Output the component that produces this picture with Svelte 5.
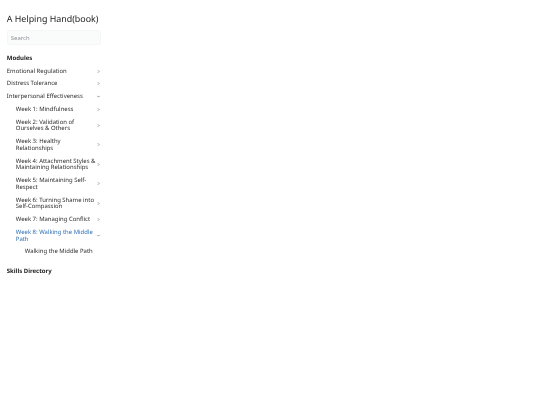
<script lang="ts">
  type Item = { label: string; chevron?: "right" | "down"; active?: boolean };

  const topModules: Item[] = [
    { label: "Emotional Regulation", chevron: "right" },
    { label: "Distress Tolerance", chevron: "right" },
    { label: "Interpersonal Effectiveness", chevron: "down" }
  ];

  const weeks: Item[] = [
    { label: "Week 1: Mindfulness", chevron: "right" },
    { label: "Week 2: Validation of Ourselves & Others", chevron: "right" },
    { label: "Week 3: Healthy Relationships", chevron: "right" },
    { label: "Week 4: Attachment Styles & Maintaining Relationships", chevron: "right" },
    { label: "Week 5: Maintaining Self-Respect", chevron: "right" },
    { label: "Week 6: Turning Shame into Self-Compassion", chevron: "right" },
    { label: "Week 7: Managing Conflict", chevron: "right" },
    { label: "Week 8: Walking the Middle Path", chevron: "down", active: true }
  ];
</script>

{#snippet row(item: Item)}
  <a class="row" class:active={item.active} href="#top">
    <span class="label">{item.label}</span>
    <svg class="chev" viewBox="0 0 16 16" aria-hidden="true">
      {#if item.chevron === "down"}
        <path d="M4 6l4 4 4-4" />
      {:else}
        <path d="M6 4l4 4-4 4" />
      {/if}
    </svg>
  </a>
{/snippet}

<aside class="sidebar">
  <h1>A Helping Hand(book)</h1>
  <input class="search" type="text" placeholder="Search" />

  <h2>Modules</h2>
  <nav>
    {#each topModules as item}
      {@render row(item)}
    {/each}
    <div class="nested">
      {#each weeks as item}
        {@render row(item)}
      {/each}
      <div class="nested">
        <a class="row" href="#top"><span class="label">Walking the Middle Path</span></a>
      </div>
    </div>
  </nav>

  <h2 class="skills">Skills Directory</h2>
</aside>

<style>
  :global(body) {
    margin: 0;
    background: #fff;
  }
  .sidebar {
    width: 95px;
    padding: 12.7px 0 0 6.8px;
    font-family: "Noto Sans", sans-serif;
    font-size: 5.95px;
    line-height: 6.75px;
    color: #2c2c2c;
    text-rendering: geometricPrecision;
    /* own layer: grayscale text antialiasing, no colour fringes */
    will-change: transform;
  }
  h1 {
    margin: 0;
    font-size: 8.9px;
    line-height: 11px;
    font-weight: 400;
    color: #222;
    white-space: nowrap;
  }
  .search {
    display: block;
    box-sizing: border-box;
    width: 94.5px;
    height: 15px;
    margin: 6.6px 0 0;
    padding: 0 3px;
    border: 1px solid #f5f6f7;
    border-radius: 2px;
    background: #fafbfb;
    font: inherit;
    outline: none;
  }
  .search::placeholder {
    color: #8f9297;
    opacity: 1;
  }
  h2 {
    margin: 9.4px 0 2.5px;
    font-size: 6px;
    line-height: 7.5px;
    font-weight: 700;
    color: #222;
  }
  .row {
    display: flex;
    align-items: center;
    justify-content: space-between;
    padding: 3px 1.3px 3px 0;
    color: inherit;
    text-decoration: none;
  }
  .label {
    flex: 1;
    min-width: 0;
  }
  .chev {
    flex: none;
    width: 5px;
    height: 5px;
    margin-left: -.5px;
    fill: none;
    stroke: #3a3a3a;
    stroke-width: 1.6;
  }
  .nested {
    padding-left: 9px;
  }
  .active {
    color: #2f6fb5;
  }
  .skills {
    margin-top: 9.5px;
  }
</style>
